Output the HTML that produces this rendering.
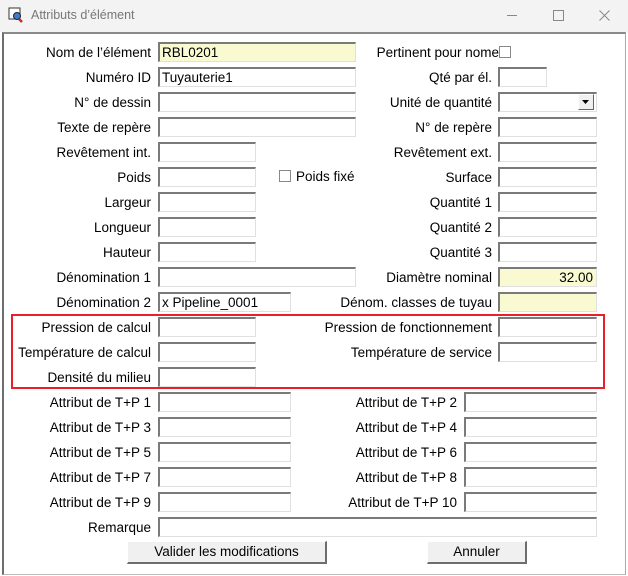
<!DOCTYPE html>
<html><head><meta charset="utf-8"><style>
body{margin:0;width:628px;height:576px;background:#fff;position:relative;overflow:hidden;font-family:"Liberation Sans",Arial,sans-serif;font-size:13.5px;color:#000}
.a{position:absolute}
.l{position:absolute;text-align:right;white-space:nowrap;line-height:21px;height:20px}
.i{position:absolute;height:20px;box-sizing:border-box;border-top:2px solid #7a7a7a;border-left:2px solid #7a7a7a;border-bottom:1px solid #e0e0e0;border-right:1px solid #e0e0e0;background:#fff;line-height:17px;padding-left:2px;white-space:nowrap;overflow:hidden}
.y{background:#fafad2}
.b{position:absolute;height:23px;box-sizing:border-box;background:#f0f0f0;border-top:1px solid #fff;border-left:1px solid #fff;border-right:2px solid #6d6d6d;border-bottom:2px solid #6d6d6d;text-align:center;line-height:20px}
</style></head><body>
<div class="a" style="left:0;top:0;width:628px;height:32px;background:#f3f3f3"></div>
<svg class="a" style="left:8px;top:7px" width="16" height="16"><rect x="1" y="1" width="11" height="11" fill="#fff" stroke="#333"/><circle cx="9" cy="9" r="3.5" fill="#3a7bd5" stroke="#222"/><line x1="11" y1="12" x2="14" y2="15" stroke="#d22" stroke-width="2.5"/></svg>
<div class="a" style="left:31px;top:8px;color:#777;font-size:12.5px">Attributs d’élément</div>
<div class="a" style="left:507px;top:15px;width:10px;height:1px;background:#888"></div>
<div class="a" style="left:553px;top:10px;width:9px;height:9px;border:1px solid #888"></div>
<svg class="a" style="left:599px;top:10px" width="11" height="11"><path d="M0.5 0.5L10.5 10.5M10.5 0.5L0.5 10.5" stroke="#888" stroke-width="1"/></svg>
<div class="a" style="left:2px;top:32px;width:621px;height:540px;border-left:2px solid #6d6d6d;border-top:2px solid #8a8a8a;border-right:1px solid #aaa;border-bottom:1px solid #bbb"></div>

<div class="l" style="right:477px;top:42px">Nom de l’élément</div><div class="i y" style="left:158px;top:42px;width:198px">RBL0201</div>
<div class="l" style="right:477px;top:67px">Numéro ID</div><div class="i" style="left:158px;top:67px;width:198px">Tuyauterie1</div>
<div class="l" style="right:477px;top:92px">N° de dessin</div><div class="i" style="left:158px;top:92px;width:198px"></div>
<div class="l" style="right:477px;top:117px">Texte de repère</div><div class="i" style="left:158px;top:117px;width:198px"></div>
<div class="l" style="right:477px;top:142px">Revêtement int.</div><div class="i" style="left:158px;top:142px;width:98px"></div>
<div class="l" style="right:477px;top:167px">Poids</div><div class="i" style="left:158px;top:167px;width:98px"></div>
<div class="l" style="right:477px;top:192px">Largeur</div><div class="i" style="left:158px;top:192px;width:98px"></div>
<div class="l" style="right:477px;top:217px">Longueur</div><div class="i" style="left:158px;top:217px;width:98px"></div>
<div class="l" style="right:477px;top:242px">Hauteur</div><div class="i" style="left:158px;top:242px;width:98px"></div>
<div class="l" style="right:477px;top:267px">Dénomination 1</div><div class="i" style="left:158px;top:267px;width:198px"></div>
<div class="l" style="right:477px;top:292px">Dénomination 2</div><div class="i" style="left:158px;top:292px;width:133px">x Pipeline_0001</div>
<div class="l" style="right:477px;top:317px">Pression de calcul</div><div class="i" style="left:158px;top:317px;width:98px"></div>
<div class="l" style="right:477px;top:342px">Température de calcul</div><div class="i" style="left:158px;top:342px;width:98px"></div>
<div class="l" style="right:477px;top:367px">Densité du milieu</div><div class="i" style="left:158px;top:367px;width:98px"></div>
<div class="l" style="right:477px;top:392px">Attribut de T+P 1</div><div class="i" style="left:158px;top:392px;width:133px"></div>
<div class="l" style="right:477px;top:417px">Attribut de T+P 3</div><div class="i" style="left:158px;top:417px;width:133px"></div>
<div class="l" style="right:477px;top:442px">Attribut de T+P 5</div><div class="i" style="left:158px;top:442px;width:133px"></div>
<div class="l" style="right:477px;top:467px">Attribut de T+P 7</div><div class="i" style="left:158px;top:467px;width:133px"></div>
<div class="l" style="right:477px;top:492px">Attribut de T+P 9</div><div class="i" style="left:158px;top:492px;width:133px"></div>
<div class="l" style="right:477px;top:517px">Remarque</div><div class="i" style="left:158px;top:517px;width:439px"></div>

<div class="l" style="right:129px;top:42px">Pertinent pour nome</div><div class="a" style="left:499px;top:46px;width:10px;height:10px;border:1px solid #888;background:#fff"></div>
<div class="l" style="right:136px;top:67px">Qté par él.</div><div class="i" style="left:498px;top:67px;width:49px"></div>
<div class="l" style="right:136px;top:92px">Unité de quantité</div><div class="i" style="left:498px;top:92px;width:99px"></div>
<div class="a" style="left:578px;top:94px;width:16px;height:16px;box-sizing:border-box;background:#f0f0f0;border-right:1px solid #666;border-bottom:1px solid #666;border-top:1px solid #fff;border-left:1px solid #fff"></div>
<svg class="a" style="left:582px;top:100px" width="8" height="5"><path d="M0 0H7L3.5 4Z" fill="#000"/></svg>
<div class="l" style="right:136px;top:117px">N° de repère</div><div class="i" style="left:498px;top:117px;width:99px"></div>
<div class="l" style="right:136px;top:142px">Revêtement ext.</div><div class="i" style="left:498px;top:142px;width:99px"></div>
<div class="a" style="left:279px;top:170px;width:10px;height:10px;border:1px solid #888;background:#fff"></div><div class="a" style="left:296px;top:169px">Poids fixé</div>
<div class="l" style="right:136px;top:167px">Surface</div><div class="i" style="left:498px;top:167px;width:99px"></div>
<div class="l" style="right:136px;top:192px">Quantité 1</div><div class="i" style="left:498px;top:192px;width:99px"></div>
<div class="l" style="right:136px;top:217px">Quantité 2</div><div class="i" style="left:498px;top:217px;width:99px"></div>
<div class="l" style="right:136px;top:242px">Quantité 3</div><div class="i" style="left:498px;top:242px;width:99px"></div>
<div class="l" style="right:136px;top:267px">Diamètre nominal</div><div class="i y" style="left:498px;top:267px;width:99px;text-align:right;padding-right:3px">32.00</div>
<div class="l" style="right:136px;top:292px">Dénom. classes de tuyau</div><div class="i y" style="left:498px;top:292px;width:99px"></div>
<div class="l" style="right:136px;top:317px">Pression de fonctionnement</div><div class="i" style="left:498px;top:317px;width:99px"></div>
<div class="l" style="right:136px;top:342px">Température de service</div><div class="i" style="left:498px;top:342px;width:99px"></div>
<div class="l" style="right:171px;top:392px">Attribut de T+P 2</div><div class="i" style="left:464px;top:392px;width:133px"></div>
<div class="l" style="right:171px;top:417px">Attribut de T+P 4</div><div class="i" style="left:464px;top:417px;width:133px"></div>
<div class="l" style="right:171px;top:442px">Attribut de T+P 6</div><div class="i" style="left:464px;top:442px;width:133px"></div>
<div class="l" style="right:171px;top:467px">Attribut de T+P 8</div><div class="i" style="left:464px;top:467px;width:133px"></div>
<div class="l" style="right:171px;top:492px">Attribut de T+P 10</div><div class="i" style="left:464px;top:492px;width:133px"></div>

<div class="a" style="left:11px;top:314px;width:594px;height:75px;box-sizing:border-box;border:2px solid #e8202a"></div>
<div class="b" style="left:127px;top:541px;width:200px">Valider les modifications</div>
<div class="b" style="left:427px;top:541px;width:100px">Annuler</div>
</body></html>
